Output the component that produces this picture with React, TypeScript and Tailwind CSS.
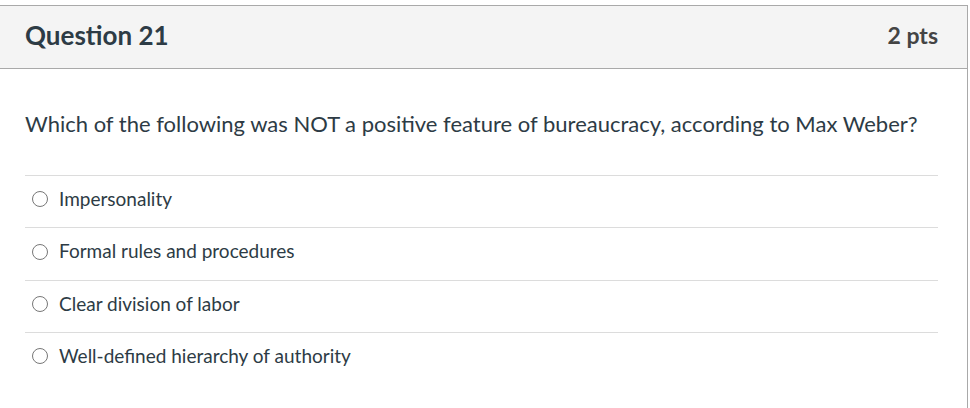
const options = [
  "Impersonality",
  "Formal rules and procedures",
  "Clear division of labor",
  "Well-defined hierarchy of authority",
];

export default function App() {
  return (
    <div className="h-[408px] w-[970px] overflow-hidden bg-white pt-[5px] font-['Lato',sans-serif] text-[#2d3b45]">
      <div className="-ml-[1px] h-[420px] w-[969px] border border-[#a9a9a9]">
        <div className="flex h-[63px] items-center justify-between border-b border-[#a9a9a9] bg-[#f4f4f4] pb-[3px] pl-[25px] pr-[29px]">
          <h2 className="text-[26px] font-bold">Question 21</h2>
          <span className="text-[23px] font-bold text-[#444]">2 pts</span>
        </div>
        <div className="pl-[25px] pr-[29px]">
          <p className="pt-[40px] pb-[36px] text-[22px] leading-[30px]">
            Which of the following was NOT a positive feature of bureaucracy, according to Max Weber?
          </p>
          <ul>
            {options.map((o) => (
              <li key={o} className="flex h-[52.4px] items-center gap-[11px] border-t border-[#dcdcdc] pb-[5px] pl-[7px]">
                <span className="h-[16px] w-[16px] rounded-full border-[1.5px] border-[#777]" />
                <span className="text-[19px]">{o}</span>
              </li>
            ))}
          </ul>
        </div>
      </div>
    </div>
  );
}
